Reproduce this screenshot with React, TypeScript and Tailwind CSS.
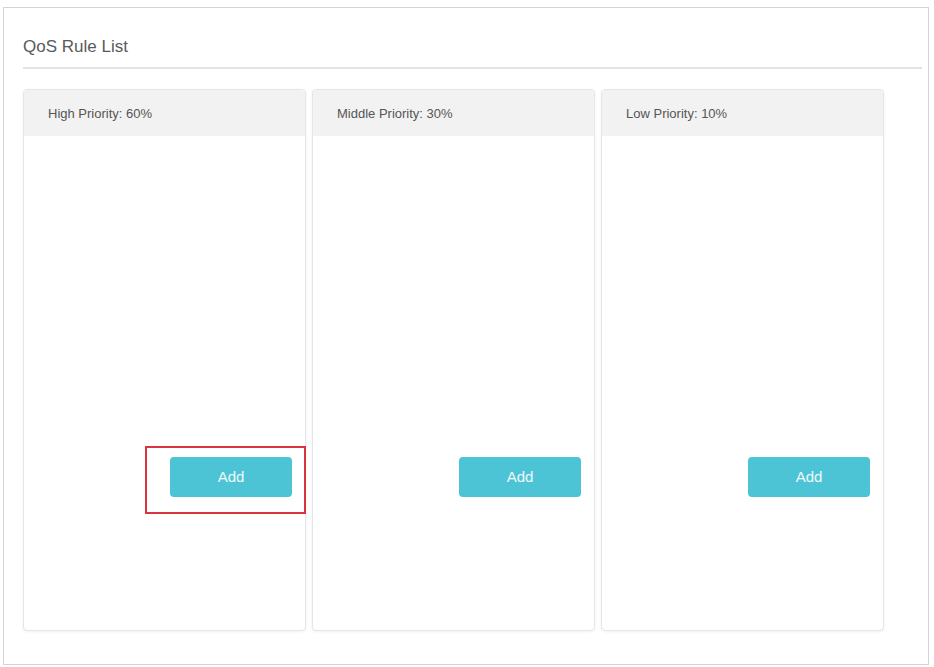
import React from "react";

const PRIORITIES = [
  { label: "High Priority: 60%", highlight: true },
  { label: "Middle Priority: 30%", highlight: false },
  { label: "Low Priority: 10%", highlight: false },
];

const App: React.FC = () => {
  return (
    <div
      className="h-[667px] w-[934px] bg-white pl-[3px] pt-[7px]"
      style={{ fontFamily: '"Liberation Sans", Arial, sans-serif' }}
    >
      <div className="h-[658px] w-[926px] border border-[#d4d4d4] pl-[19px] pr-[6px] pt-[27px]">
        <div className="border-b-2 border-[#e3e3e3] pb-[8px]">
          <h2 className="text-[17px] leading-[24px] text-[#5a5a5a]">QoS Rule List</h2>
        </div>

        <div className="mt-[20px] flex gap-[6px]">
          {PRIORITIES.map((item) => (
            <div
              key={item.label}
              className="relative h-[542px] w-[283px] rounded-[4px] border border-[#e6e6e6] bg-white shadow-[0_1px_3px_rgba(0,0,0,0.06)]"
            >
              <div className="flex h-[46px] items-center rounded-t-[4px] bg-[#f2f2f2] pl-[24px] pt-[2px] text-[13px] text-[#555]">
                {item.label}
              </div>
              <div className="flex justify-end pr-[13px] pt-[321px]">
                <button
                  type="button"
                  className="h-[40px] w-[122px] rounded-[4px] bg-[#4dc4d5] text-[15px] text-white/90"
                >
                  Add
                </button>
              </div>
              {item.highlight && (
                <div className="pointer-events-none absolute left-[121px] top-[356px] h-[68px] w-[161px] border-2 border-[#d9343c]" />
              )}
            </div>
          ))}
        </div>
      </div>
    </div>
  );
};

export default App;
